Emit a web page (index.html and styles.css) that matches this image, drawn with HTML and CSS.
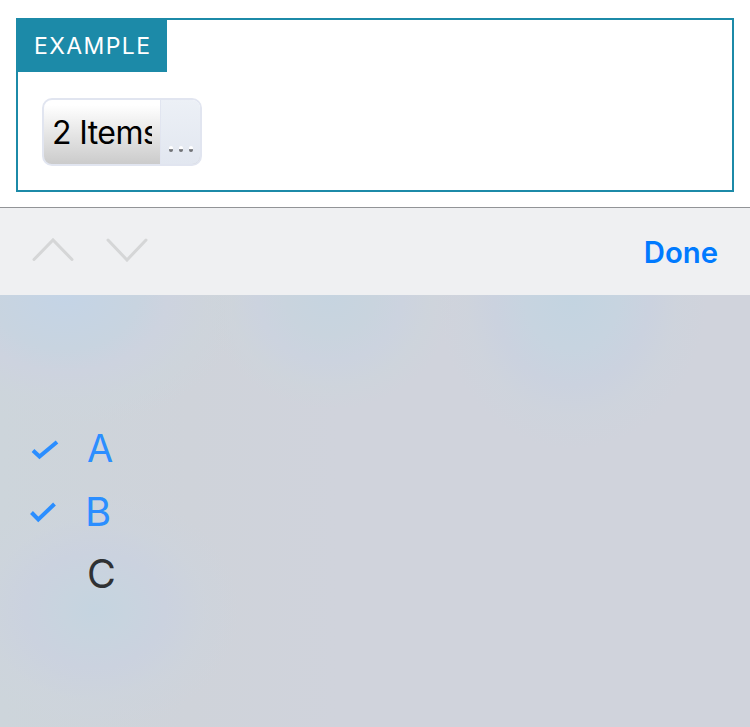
FILE: index.html
```html
<!DOCTYPE html>
<html lang="en">
<head>
<meta charset="utf-8">
<title>Multiple select</title>
<link rel="stylesheet" href="styles.css">
</head>
<body>
<section class="example">
  <div class="example-label">EXAMPLE</div>
  <div class="select">
    <span class="select-value">2 Items</span>
    <span class="select-more"><i class="dot"></i><i class="dot"></i><i class="dot"></i></span>
  </div>
</section>
<div class="toolbar">
  <svg class="arrows" width="118" height="28" viewBox="0 0 118 28" fill="none" stroke="#d5d6d7" stroke-width="3" stroke-linecap="round">
    <path d="M3 25.5 22 6 41 25.5M77 6l19 20 19-20"/>
  </svg>
  <span class="done">Done</span>
</div>
<div class="picker">
  <div class="option option-a selected">
    <svg class="check" width="28" height="22" viewBox="0 0 28 22"><path d="M2 12.5l6.5 6L26 4"/></svg>
    <span class="letter">A</span>
  </div>
  <div class="option option-b selected">
    <svg class="check" width="28" height="22" viewBox="0 0 28 22"><path d="M2.5 11.5l6.8 7L25.5 3"/></svg>
    <span class="letter">B</span>
  </div>
  <div class="option option-c">
    <span class="check"></span>
    <span class="letter">C</span>
  </div>
</div>
</body>
</html>
```

FILE: styles.css
```css
* { box-sizing: border-box; }
body {
  margin: 0;
  height: 727px;
  padding-top: 18px;
  overflow: hidden;
  background: #fff;
  font-family: Inter, "Liberation Sans", sans-serif;
}
.example {
  height: 174px;
  margin: 0 16px 15px;
  border: 2px solid #1c8aa8;
}
.example-label {
  width: 149px;
  height: 52px;
  padding-left: 16px;
  background: #1c8aa8;
  color: #fff;
  font-size: 23px;
  line-height: 52px;
  letter-spacing: 1.4px;
}
.select {
  display: flex;
  width: 160px;
  height: 68px;
  margin: 26px 0 0 24px;
  border: 2px solid #e1e5f0;
  border-radius: 10px;
  overflow: hidden;
  background: linear-gradient(#fff, #fff 8%, #cbcbcb);
}
.select-value {
  width: 100px;
  margin: 0 8px;
  overflow: hidden;
  white-space: nowrap;
  color: #000;
  font-size: 32px;
  line-height: 66px;
  letter-spacing: -0.6px;
}
.select-more {
  display: flex;
  flex: 1;
  gap: 6px;
  align-items: flex-end;
  padding: 0 0 12px 8px;
  border-left: 1px solid #e1e5f0;
  background: linear-gradient(#ecf0f6, #e2e7f0);
}
.dot {
  width: 4px;
  height: 6px;
  border-radius: 2px;
  background: linear-gradient(#fff 50%, #707276 60%);
}
.toolbar {
  display: flex;
  justify-content: space-between;
  height: 88px;
  padding: 26px 32px 0 31px;
  border-top: 1px solid #929497;
  background: #eff0f2;
}
.done {
  color: #007aff;
  font-size: 29.3px;
  font-weight: 600;
  line-height: 38px;
}
.picker {
  height: 432px;
  padding-top: 122px;
  background:
    radial-gradient(ellipse 180px 135px at 65px 0, #c4d4e6 0, #c8d4e0 40%, #cdd3df 57%, #cdd5dc99 80%, transparent),
    radial-gradient(ellipse 125px 115px at 330px 0, #c6d4e0 0, #c9d4de 35%, #ccd3df 58%, #cdd5dc99 80%, transparent),
    radial-gradient(ellipse 135px 155px at 572px 0, #c3d4e1 0, #c7d4e0 35%, #cbd2df 58%, #cdd4dd99 78%, transparent),
    radial-gradient(ellipse 145px 120px at 95px 315px, #c5d4e0 0, #c8d4df 22%, #cbd2df 48%, #cdd4dd99 75%, transparent),
    linear-gradient(90deg, #cdd5db, #cfd3da 25%, #d0d3dc 45%);
}
.option {
  display: flex;
  align-items: center;
  height: 63px;
  color: #2f3133;
}
.check {
  width: 28px;
  height: 22px;
  margin-left: 31px;
  fill: none;
  stroke: #2b8eff;
  stroke-width: 4;
}
.letter { margin-left: 28px; font-size: 38px; line-height: 63px; }
.selected { color: #2b8eff; }
.option-b .check { margin-left: 29px; }
.option-b .letter { font-size: 40px; }
.option-c .letter { font-size: 39.5px; }
```
